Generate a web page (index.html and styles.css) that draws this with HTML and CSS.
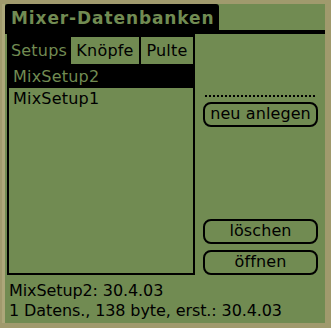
FILE: index.html
```html
<!DOCTYPE html>
<html lang="de">
<head>
<meta charset="utf-8">
<title>Mixer-Datenbanken</title>
<link rel="stylesheet" href="styles.css">
</head>
<body>
<div class="screen">
  <div class="titlebar"><span class="title">Mixer-Datenbanken</span></div>
  <div class="title-rule"></div>
  <div class="main">
    <div class="listbox">
      <div class="tabs">
        <div class="tab tab-active">Setups</div>
        <div class="tab tab-knoepfe">Knöpfe</div>
        <div class="tab tab-pulte">Pulte</div>
      </div>
      <div class="rows">
        <div class="row row-selected">MixSetup2</div>
        <div class="row">MixSetup1</div>
      </div>
    </div>
    <div class="side">
      <div class="dotted"></div>
      <div class="btn">neu anlegen</div>
      <div class="spacer"></div>
      <div class="btn">löschen</div>
      <div class="btn btn-last">öffnen</div>
    </div>
  </div>
  <div class="info">
    <div class="info-line">MixSetup2: 30.4.03</div>
    <div class="info-line">1 Datens., 138 byte, erst.: 30.4.03</div>
  </div>
</div>
</body>
</html>
```
FILE: styles.css
```css
html, body {
  margin: 0;
  padding: 0;
}
body {
  width: 331px;
  height: 328px;
  background: #a09a6d;
  overflow: hidden;
  font-family: "DejaVu Sans", sans-serif;
  color: #000;
}
.screen {
  margin: 4px 0 0 5px;
  width: 320px;
  height: 319px;
  background: #718b52;
  box-shadow: -3px 0 0 #aca77a;
  display: flex;
  flex-direction: column;
}
.titlebar {
  width: 214px;
  height: 26px;
  box-sizing: border-box;
  background: #000;
  border-radius: 3px 3px 0 0;
  padding: 3px 0 0 6px;
}
.title {
  display: block;
  font-weight: bold;
  font-size: 17px;
  line-height: 23px;
  letter-spacing: 0.9px;
  color: #718b52;
  white-space: nowrap;
}
.title-rule {
  height: 4px;
  background: #000;
}
.main {
  display: flex;
  height: 241px;
}
.listbox {
  margin-left: 2px;
  width: 188px;
  box-sizing: border-box;
  border: 2px solid #000;
  border-top: none;
  display: flex;
  flex-direction: column;
}
.tabs {
  display: flex;
  gap: 2px;
  background: #000;
  padding: 3px 0 2px 0;
  font-size: 16px;
  letter-spacing: 0.2px;
}
.tab {
  height: 27px;
  line-height: 27px;
  text-align: center;
  background: #718b52;
  color: #000;
}
.tab-active {
  width: 60px;
  background: #000;
  color: #718b52;
}
.tab-knoepfe {
  width: 68px;
}
.tab-pulte {
  width: 52px;
}
.rows {
  flex: 1;
  font-size: 16px;
  letter-spacing: 0.2px;
}
.row {
  height: 22px;
  line-height: 21px;
  padding-left: 4px;
}
.row-selected {
  background: #000;
  color: #718b52;
}
.side {
  margin-left: 8px;
  width: 115px;
  display: flex;
  flex-direction: column;
  padding-top: 61px;
  box-sizing: border-box;
}
.dotted {
  margin-left: 2px;
  width: 110px;
  height: 2px;
  background: repeating-linear-gradient(to right, #000 0 2px, transparent 2px 4px);
  margin-bottom: 5px;
}
.btn {
  height: 25px;
  box-sizing: border-box;
  border: 2px solid #000;
  border-radius: 8px;
  text-align: center;
  font-size: 16px;
  line-height: 20px;
  letter-spacing: 0.1px;
}
.spacer {
  flex: 1;
}
.btn-last {
  margin-top: 6px;
}
.info {
  margin-top: 6px;
  padding-left: 4px;
  font-size: 16px;
  letter-spacing: -0.1px;
}
.info-line {
  height: 20px;
  line-height: 20px;
  white-space: nowrap;
}
```
